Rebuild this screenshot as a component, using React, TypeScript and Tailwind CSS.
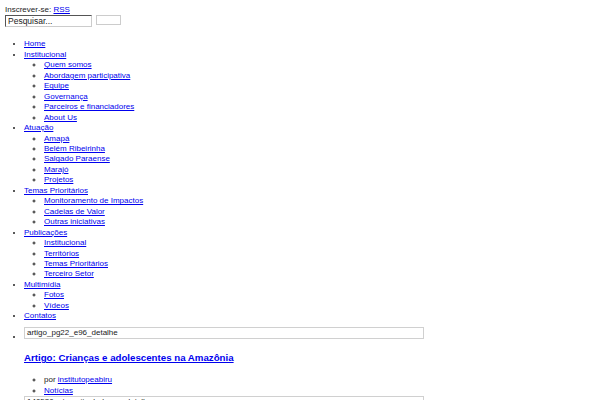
import React from 'react';

const menu: { label: string; children?: string[] }[] = [
  { label: 'Home' },
  {
    label: 'Institucional',
    children: ['Quem somos', 'Abordagem participativa', 'Equipe', 'Governança', 'Parceiros e financiadores', 'About Us'],
  },
  { label: 'Atuação', children: ['Amapá', 'Belém Ribeirinha', 'Salgado Paraense', 'Marajó', 'Projetos'] },
  { label: 'Temas Prioritários', children: ['Monitoramento de Impactos', 'Cadeias de Valor', 'Outras iniciativas'] },
  { label: 'Publicações', children: ['Institucional', 'Territórios', 'Temas Prioritários', 'Terceiro Setor'] },
  { label: 'Multimídia', children: ['Fotos', 'Vídeos'] },
  { label: 'Contatos' },
];

const Link = ({ children }: { children: React.ReactNode }) => (
  <a href="#" className="text-[#0000ee] underline">
    {children}
  </a>
);

const Broken = ({ alt }: { alt: string }) => (
  <span className="inline-block w-[400px] h-[12px] border border-[#d0d0d0] px-[2px] align-baseline overflow-hidden whitespace-nowrap leading-[10px] text-[#222]">
    {alt}
  </span>
);

export default function App() {
  return (
    <div className="bg-white min-h-[400px] p-[5px] text-[8px] leading-[10.46px] text-[#222] font-['Liberation_Sans',Arial,sans-serif]">
      <div>
        Inscrever-se: <Link>RSS</Link>
      </div>
      <form className="flex items-start gap-[4px]">
        <input
          defaultValue="Pesquisar..."
          className="w-[87px] h-[12px] border border-[#555] border-r-[#ccc] border-b-[#ccc] px-[2px] text-[8.5px] text-[#222] outline-none"
        />
        <button type="button" className="w-[25px] h-[10px] border border-[#ccc] bg-white" />
      </form>

      <ul className="list-disc pl-[19px] mt-[12px]">
        {menu.map((m) => (
          <li key={m.label}>
            <Link>{m.label}</Link>
            {m.children && (
              <ul className="list-[circle] pl-[20px]">
                {m.children.map((c) => (
                  <li key={c}>
                    <Link>{c}</Link>
                  </li>
                ))}
              </ul>
            )}
          </li>
        ))}
        <li className="mt-[5px]">
          <Broken alt="artigo_pg22_e96_detalhe" />
          <h2 className="mt-[10px] text-[9.7px] leading-[12px] font-bold">
            <Link>Artigo: Crianças e adolescentes na Amazônia</Link>
          </h2>
          <ul className="list-[circle] pl-[20px] mt-[11px]">
            <li>
              por <Link>institutopeabiru</Link>
            </li>
            <li>
              <Link>Notícias</Link>
            </li>
          </ul>
          <Broken alt="140530_ater_site_balanco_detalhe" />
        </li>
      </ul>
    </div>
  );
}
